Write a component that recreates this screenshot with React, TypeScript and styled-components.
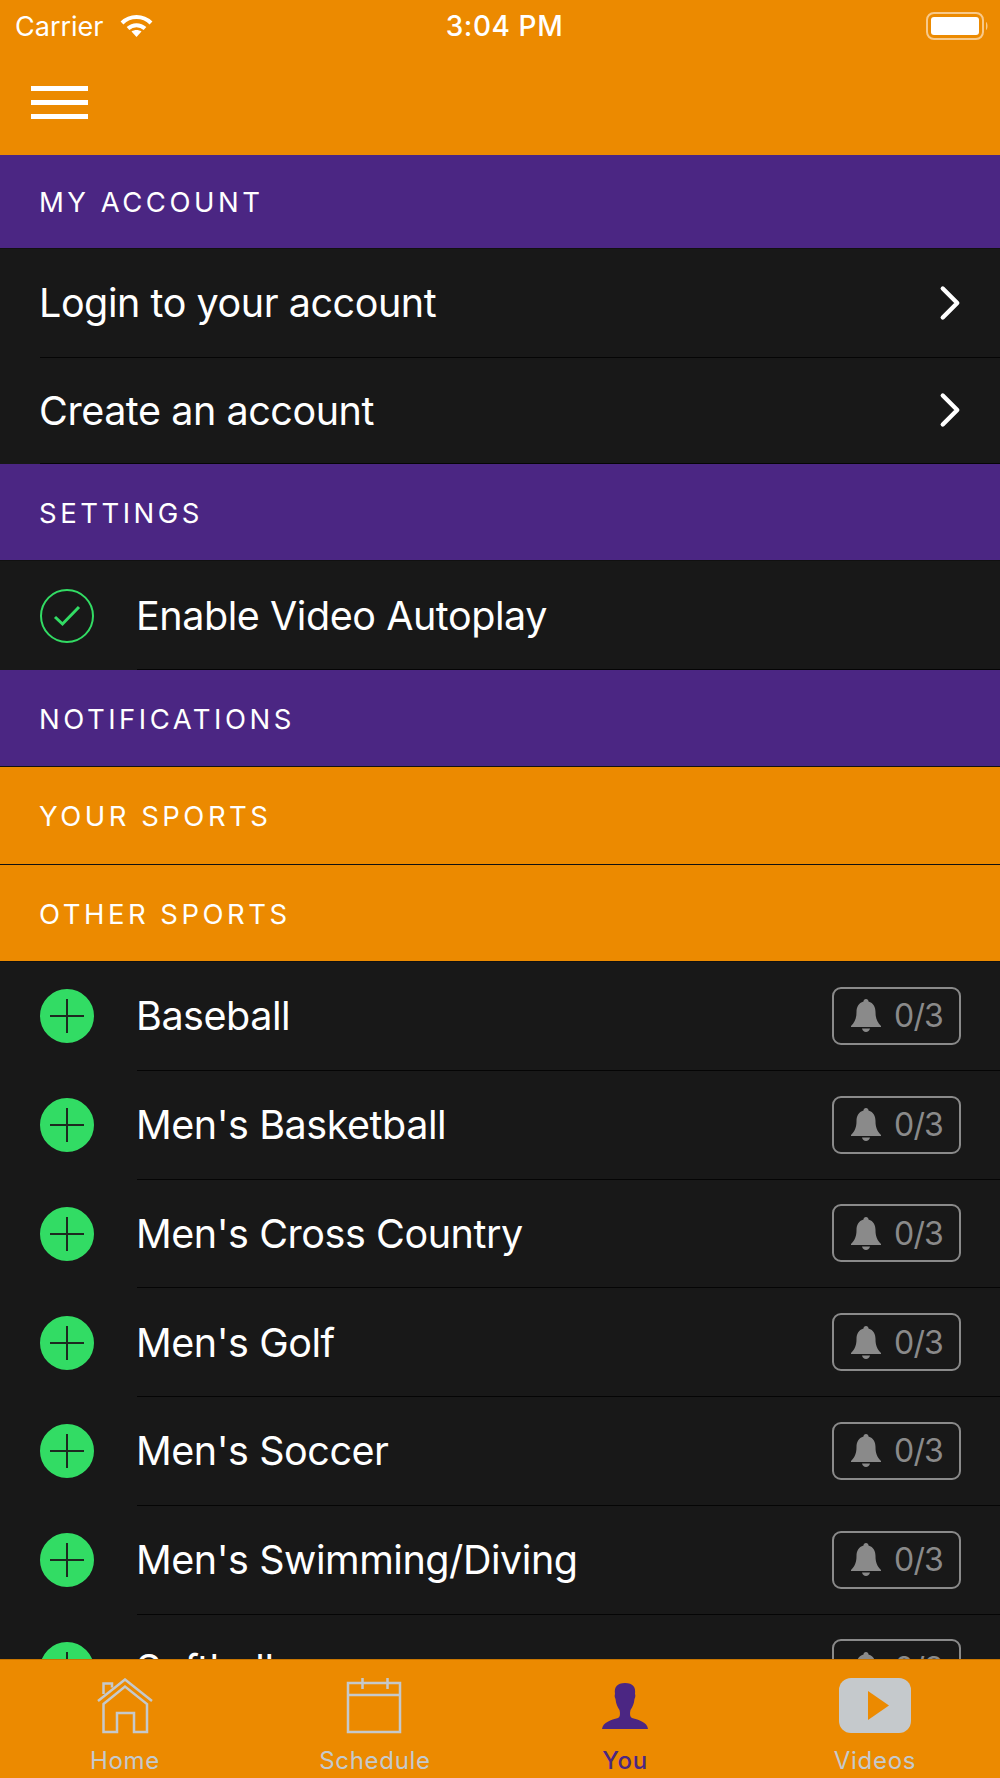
import React from 'react'
import styled, { createGlobalStyle } from 'styled-components'
import { ChevronRight } from 'lucide-react'

const GlobalStyle = createGlobalStyle`
  html, body {
    margin: 0;
    padding: 0;
    background: #181818;
    font-family: Inter, "Liberation Sans", sans-serif;
  }
  * { box-sizing: border-box; }
`

const ORANGE = '#ec8a00'
const PURPLE = '#4b2683'
const DARK = '#181818'
const GREEN = '#32dc64'
const TAB_GREY = '#c5c9cc'

const Screen = styled.div`
  width: 1000px;
  height: 1778px;
  display: flex;
  flex-direction: column;
  overflow: hidden;
  background: ${DARK};
  color: #fff;
`

const TopBar = styled.header`
  height: 155px;
  flex: none;
  background: ${ORANGE};
  display: flex;
  flex-direction: column;
`

const StatusBar = styled.div`
  height: 52px;
  padding: 0 11px 0 15px;
  display: grid;
  grid-template-columns: 1fr auto 1fr;
  align-items: center;
  font-size: 27px;
`

const StatusLeft = styled.div`
  display: flex;
  align-items: center;
  gap: 16px;
`

const StatusRight = styled.div`
  display: flex;
  justify-content: flex-end;
`

const Time = styled.span`
  margin-left: 5px;
  font-size: 28px;
  font-weight: 500;
  letter-spacing: 0.6px;
`

const MenuButton = styled.div`
  margin: 34px 0 0 31px;
  width: 57px;
  display: flex;
  flex-direction: column;
  gap: 9px;
`

const MenuBar = styled.span`
  height: 5px;
  background: #fff;
`

const Scroll = styled.main`
  flex: 1;
  min-height: 0;
  overflow: hidden;
`

const Section = styled.div<{ $bg: string; $h?: number }>`
  height: ${(p) => p.$h ?? 97}px;
  padding: 1px 0 0 39px;
  display: flex;
  align-items: center;
  background: ${(p) => p.$bg};
  border-bottom: 1px solid #111;
  font-size: 27.5px;
  letter-spacing: 3.5px;
`

const Row = styled.div<{ $h?: number }>`
  height: ${(p) => p.$h ?? 108.75}px;
  padding-left: 40px;
  display: flex;
  align-items: center;
  background: ${DARK};
`

const RowBody = styled.div<{ $flush?: boolean }>`
  flex: 1;
  height: 100%;
  padding-right: 39px;
  display: flex;
  align-items: center;
  justify-content: space-between;
  margin-left: ${(p) => (p.$flush ? 0 : 43)}px;
  border-bottom: 1px solid #050505;
`

const RowLabel = styled.span`
  margin-left: -1px;
  padding-top: 1px;
  font-size: 39.5px;
  letter-spacing: -0.45px;
`

const Chevron = styled(ChevronRight)`
  width: 58px;
  height: 58px;
  margin-right: -18px;
  color: #fff;
`

const Round = styled.div<{ $filled?: boolean }>`
  width: 54px;
  height: 54px;
  flex: none;
  border-radius: 50%;
  display: flex;
  align-items: center;
  justify-content: center;
  border: 2px solid ${GREEN};
  background: ${(p) => (p.$filled ? GREEN : 'transparent')};
`

const Badge = styled.div`
  width: 129px;
  height: 58px;
  padding-left: 17px;
  display: flex;
  align-items: center;
  gap: 13px;
  border: 2px solid #8a8a8a;
  border-radius: 9px;
  color: #8a8a8a;
  font-size: 32px;
  letter-spacing: -0.8px;
`

const TabBar = styled.nav`
  height: 119px;
  flex: none;
  padding-top: 18px;
  display: grid;
  grid-template-columns: 250px 250px 250px 250px;
  background: ${ORANGE};
  border-top: 1px solid #c77400;
`

const Tab = styled.div<{ $active?: boolean }>`
  display: flex;
  flex-direction: column;
  align-items: center;
  color: ${(p) => (p.$active ? PURPLE : TAB_GREY)};
  font-size: 24px;
  font-weight: ${(p) => (p.$active ? 500 : 400)};
  letter-spacing: 0.7px;
`

const TabIcon = styled.svg`
  width: 72px;
  height: 56px;
  margin-bottom: 12px;
  display: block;
`

const Wifi = () => (
  <svg width="33" height="24" viewBox="0 0 33 24" fill="none" stroke="#fff" strokeWidth="4">
    <path d="M2 9 C10 1 23 1 31 9" />
    <path d="M8 14.5 C13 10 20 10 25 14.5" />
    <path d="M16.5 23 L11.5 17.5 C14.5 15.5 18.5 15.5 21.5 17.5 Z" fill="#fff" stroke="none" />
  </svg>
)

const Battery = () => (
  <svg width="63" height="28" viewBox="0 0 63 28">
    <rect x="1" y="1" width="56" height="26" rx="7" fill="none" stroke="#f8c98a" strokeWidth="2" />
    <rect x="5" y="5" width="48" height="18" rx="3" fill="#fff" />
    <path d="M60 10 C62 11 62 17 60 18 Z" fill="#f8c98a" />
  </svg>
)

const Check = () => (
  <svg width="32" height="26" viewBox="0 0 32 26" fill="none" stroke={GREEN} strokeWidth="3">
    <path d="M4 14 L11.500 21 L28 4" />
  </svg>
)

const Plus = () => (
  <svg width="34" height="34" viewBox="0 0 34 34" stroke="#1d2a20" strokeWidth="2">
    <path d="M17 0 V34 M0 17 H34" />
  </svg>
)

const BellGlyph = () => (
  <svg width="30" height="33" viewBox="0 0 30 33" fill="#8a8a8a">
    <path d="M15 0 C16.500 0 17.500 1 17.500 2.500 C22.500 4 24.500 8 24.500 13 C24.500 19 26 23 30 27 L30 28 H0 L0 27 C4 23 5.500 19 5.500 13 C5.500 8 7.500 4 12.500 2.500 C12.500 1 13.500 0 15 0 Z" />
    <path d="M11 29.500 H19 C18.500 31.800 17 33 15 33 C13 33 11.500 31.800 11 29.500 Z" />
  </svg>
)

const HomeIcon = () => (
  <TabIcon viewBox="0 0 72 56" fill="none" stroke={TAB_GREY} strokeWidth="2.5">
    <path d="M9 23 L36 1.5 L63 23" />
    <path d="M14.5 26 L36 8.5 L58 26 V54 H45 V35 H28 V54 H14.5 Z" />
    <path d="M14.5 16 V5.5 H23 V9.5" />
  </TabIcon>
)

const CalendarIcon = () => (
  <TabIcon viewBox="0 0 72 56" fill="none" stroke={TAB_GREY} strokeWidth="2.5">
    <rect x="9" y="5" width="52" height="49" />
    <path d="M9 17 H61 M23.500 0 V11 M48.500 0 V11" />
  </TabIcon>
)

const PersonIcon = () => (
  <TabIcon viewBox="0 0 72 56">
    <path
      fill={PURPLE}
      d="M13 51 C14 44 22 42 29 40 C31 39 31.500 36 30.500 32 C28.500 29 27 26 26.500 21 C25.500 19 25.500 17 26 16 C25 9 28 5 36 5 C44 5 47 9 46 16 C46.500 17 46.500 19 45.500 21 C45 26 43.500 29 41.500 32 C40.500 36 41 39 43 40 C50 42 58 44 59 51 Z"
    />
  </TabIcon>
)

const VideoIcon = () => (
  <TabIcon viewBox="0 0 72 56">
    <rect x="0" y="0" width="72" height="55" rx="12" fill={TAB_GREY} />
    <path d="M29 13 L50 27.500 L29 42 Z" fill={ORANGE} />
  </TabIcon>
)

const sports = [
  "Baseball",
  "Men's Basketball",
  "Men's Cross Country",
  "Men's Golf",
  "Men's Soccer",
  "Men's Swimming/Diving",
  'Softball',
]

function App() {
  return (
    <Screen>
      <GlobalStyle />
      <TopBar>
        <StatusBar>
          <StatusLeft>
            Carrier
            <Wifi />
          </StatusLeft>
          <Time>3:04 PM</Time>
          <StatusRight>
            <Battery />
          </StatusRight>
        </StatusBar>
        <MenuButton>
          <MenuBar />
          <MenuBar />
          <MenuBar />
        </MenuButton>
      </TopBar>

      <Scroll>
        <Section $bg={PURPLE} $h={94}>MY ACCOUNT</Section>
        <Row $h={108.5}>
          <RowBody $flush>
            <RowLabel>Login to your account</RowLabel>
            <Chevron strokeWidth={1.8} />
          </RowBody>
        </Row>
        <Row $h={106.5}>
          <RowBody $flush>
            <RowLabel>Create an account</RowLabel>
            <Chevron strokeWidth={1.8} />
          </RowBody>
        </Row>
        <Section $bg={PURPLE}>SETTINGS</Section>
        <Row $h={109}>
          <Round>
            <Check />
          </Round>
          <RowBody>
            <RowLabel>Enable Video Autoplay</RowLabel>
          </RowBody>
        </Row>
        <Section $bg={PURPLE}>NOTIFICATIONS</Section>
        <Section $bg={ORANGE} $h={98}>YOUR SPORTS</Section>
        <Section $bg={ORANGE}>OTHER SPORTS</Section>
        {sports.map((name) => (
          <Row key={name}>
            <Round $filled>
              <Plus />
            </Round>
            <RowBody>
              <RowLabel>{name}</RowLabel>
              <Badge>
                <BellGlyph />
                0/3
              </Badge>
            </RowBody>
          </Row>
        ))}
      </Scroll>

      <TabBar>
        <Tab>
          <HomeIcon />
          Home
        </Tab>
        <Tab>
          <CalendarIcon />
          Schedule
        </Tab>
        <Tab $active>
          <PersonIcon />
          You
        </Tab>
        <Tab>
          <VideoIcon />
          Videos
        </Tab>
      </TabBar>
    </Screen>
  )
}

export default App
